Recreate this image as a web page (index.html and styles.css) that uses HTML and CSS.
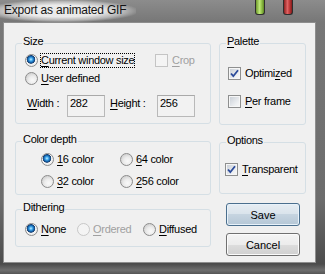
FILE: index.html
```html
<!DOCTYPE html>
<html lang="en">
<head>
  <meta charset="UTF-8" />
  <title>Export as animated GIF</title>
  <link rel="stylesheet" href="styles.css">
</head>
<body>

  <div class="window">
    <div class="titlebar">
      <span class="title">Export as animated GIF</span>
      <span class="cap cap-green"></span>
      <span class="cap cap-red"></span>
    </div>

    <div class="client">
      <div class="col-left">
        <div class="group group-size">
          <span class="legend">Size</span>
          <div class="row">
            <label class="opt opt-wide"><span class="radio on"></span><span class="focus"><u>C</u>urrent window size</span></label>
            <label class="opt chk disabled"><span class="check off"></span><span><u>C</u>rop</span></label>
          </div>
          <div class="row row-gap">
            <label class="opt"><span class="radio"></span><span><u>U</u>ser defined</span></label>
          </div>
          <div class="dims">
            <span class="dim-label w"><u>W</u>idth :</span>
            <span class="field">282</span>
            <span class="dim-label h"><u>H</u>eight :</span>
            <span class="field">256</span>
          </div>
        </div>

        <div class="group group-depth">
          <span class="legend">Color depth</span>
          <div class="depth-grid">
            <label class="opt"><span class="radio on"></span><span><u>1</u>6 color</span></label>
            <label class="opt"><span class="radio"></span><span><u>6</u>4 color</span></label>
            <label class="opt"><span class="radio"></span><span><u>3</u>2 color</span></label>
            <label class="opt"><span class="radio"></span><span><u>2</u>56 color</span></label>
          </div>
        </div>

        <div class="group group-dither">
          <span class="legend">Dithering</span>
          <div class="row">
            <label class="opt d-none"><span class="radio on"></span><span><u>N</u>one</span></label>
            <label class="opt d-ordered disabled"><span class="radio off"></span><span><u>O</u>rdered</span></label>
            <label class="opt"><span class="radio"></span><span><u>D</u>iffused</span></label>
          </div>
        </div>
      </div>

      <div class="col-right">
        <div class="group group-palette">
          <span class="legend"><u>P</u>alette</span>
          <div class="row">
            <label class="opt chk"><span class="check"><svg width="11" height="11" viewBox="0 0 11 11"><path d="M2 5.5 L4.3 8.2 L9 2.2" fill="none" stroke="#2a4a9a" stroke-width="1.8"/></svg></span><span>Optimi<u>z</u>ed</span></label>
          </div>
          <div class="row row-gap-lg">
            <label class="opt chk"><span class="check"></span><span><u>P</u>er frame</span></label>
          </div>
        </div>

        <div class="group group-options">
          <span class="legend">Options</span>
          <div class="row">
            <label class="opt chk"><span class="check"><svg width="11" height="11" viewBox="0 0 11 11"><path d="M2 5.5 L4.3 8.2 L9 2.2" fill="none" stroke="#2a4a9a" stroke-width="1.8"/></svg></span><span><u>T</u>ransparent</span></label>
          </div>
        </div>

        <button class="btn default">Save</button>
        <button class="btn">Cancel</button>
      </div>
    </div>
  </div>

</body>
</html>
```

FILE: styles.css
```css
body {
  margin: 0;
  font-family: 'Liberation Sans', Arial, sans-serif;
  font-size: 11px;
  letter-spacing: -0.3px;
  color: #000;
  background: #5f5f5f;
}
u {
  text-underline-offset: 2px;
}
.window {
  width: 325px;
  height: 274px;
  overflow: hidden;
  background: linear-gradient(#8c8c8c 0, #777 22px, #6c6c6c 200px, #4c4c4c 264px, #6e6e6e 270px, #555 274px);
}
.titlebar {
  height: 22px;
  display: flex;
  align-items: flex-start;
}
.title {
  font-size: 12px;
  line-height: 14px;
  letter-spacing: -0.2px;
  padding: 3px 10px 5px 4px;
  color: #141414;
  background: radial-gradient(ellipse at 45% 50%, rgba(240, 240, 240, 0.95) 38%, rgba(225, 225, 225, 0.55) 60%, rgba(200, 200, 200, 0) 74%);
}
.cap {
  width: 10px;
  height: 15px;
  box-sizing: border-box;
  border: 1px solid #2e2e2e;
  border-top: none;
  border-radius: 0 0 3px 3px;
}
.cap-green {
  margin-left: auto;
  background: linear-gradient(90deg, #6f9a2c, #bfe879 45%, #a6d45a 60%, #5f8a22);
}
.cap-red {
  margin-left: 18px;
  margin-right: 32px;
  background: linear-gradient(90deg, #8f2020, #e06565 45%, #cc4444 60%, #851a1a);
}
.client {
  margin-left: 3px;
  width: 313px;
  height: 241px;
  box-sizing: border-box;
  border: 1px solid #8e8e8e;
  background: #f0f0f0;
  display: flex;
  gap: 8px;
  padding: 20px 0 0 11px;
}
.col-left {
  width: 196px;
  display: flex;
  flex-direction: column;
}
.col-right {
  width: 87px;
  display: flex;
  flex-direction: column;
}
.group {
  position: relative;
  border: 1px solid #d5dfe5;
  border-radius: 3px;
  box-sizing: border-box;
}
.legend {
  position: absolute;
  top: -9px;
  left: 6px;
  padding: 0 1px;
  line-height: 13px;
  background: #f0f0f0;
}
.row {
  display: flex;
  align-items: center;
  height: 16px;
}
.row-gap {
  margin-top: 2px;
}
.row-gap-lg {
  margin-top: 12px;
}
.opt {
  display: flex;
  align-items: center;
  gap: 3px;
  line-height: 13px;
  white-space: nowrap;
}
.opt.chk {
  gap: 4px;
}
.opt-wide {
  width: 130px;
}
.disabled {
  color: #a0a0a0;
}
.focus {
  outline: 1px dotted #000;
}

/* radio buttons */
.radio {
  flex: none;
  width: 13px;
  height: 13px;
  box-sizing: border-box;
  border-radius: 50%;
  border: 1px solid #8b8b8b;
  background: radial-gradient(circle at 60% 65%, #f9f9f9 0, #ececec 40%, #d2d2d2 75%, #f4f4f4 80%);
}
.radio.on {
  background: radial-gradient(circle at 45% 40%, #c9efff 0, #47aef0 1.5px, #1466b0 3px, #173d6e 4px, #f4f4f4 4.6px, #e0e0e0 100%);
}
.radio.off {
  border-color: #c8c8c8;
  background: #f4f4f4;
}

/* check boxes */
.check {
  flex: none;
  width: 13px;
  height: 13px;
  box-sizing: border-box;
  border: 1px solid #8e8f8f;
  background: linear-gradient(135deg, #c6ccd4, #eef0f2 70%, #f8f8f8);
  box-shadow: inset 0 0 0 1px #f6f6f6;
  display: flex;
  align-items: center;
  justify-content: center;
}
.check.off {
  border-color: #c4c4c4;
  background: #f4f4f4;
  box-shadow: none;
}

.group-size {
  padding: 8px 0 6px 9px;
}
.dims {
  display: flex;
  align-items: flex-start;
  height: 22px;
  margin-top: 9px;
  padding-left: 2px;
}
.dim-label {
  margin-top: 2px;
  line-height: 12px;
}
.dim-label.w {
  width: 40px;
}
.dim-label.h {
  width: 47px;
  margin-left: 5px;
}
.field {
  width: 38px;
  height: 22px;
  box-sizing: border-box;
  border: 1px solid #b9b9b9;
  border-top-color: #a9a9a9;
  background: #f2f2f2;
  padding: 1px 2px;
  line-height: 12px;
}

.group-depth {
  margin-top: 17px;
  padding: 9px 0 5px 25px;
}
.depth-grid {
  display: grid;
  grid-template-columns: 79px auto;
  grid-auto-rows: 16px;
  row-gap: 6px;
}

.group-dither {
  margin-top: 14px;
  padding: 11px 0 9px 9px;
}
.d-none {
  width: 52px;
}
.d-ordered {
  width: 66px;
}

.group-palette {
  padding: 21px 0 15px 8px;
}
.group-options {
  margin-top: 17px;
  padding: 18px 0 16px 5px;
}

.btn {
  width: 74px;
  height: 23px;
  margin-left: 7px;
  padding: 0;
  box-sizing: border-box;
  border: 1px solid #707070;
  border-radius: 3px;
  font: inherit;
  color: #000;
  background: linear-gradient(#f4f4f4 0, #ececec 50%, #dddddd 50%, #d0d0d0 100%);
  box-shadow: inset 0 0 0 1px #fbfbfb;
  margin-top: 7px;
}
.btn.default {
  margin-top: 9px;
  border-color: #4b6f8e;
  background: linear-gradient(#e6edf3 0, #d9e3eb 50%, #c6d4e0 50%, #b5c7d6 100%);
  box-shadow: inset 0 0 0 1px #e8f2fa;
}
```
